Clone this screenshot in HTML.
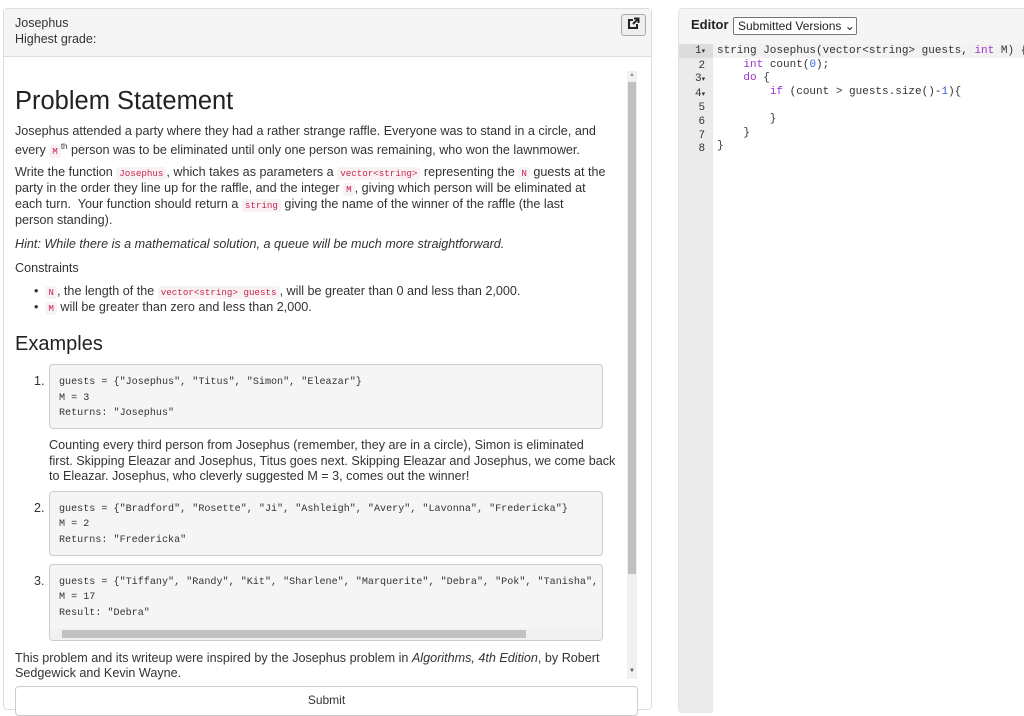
<!DOCTYPE html>
<html><head><meta charset="utf-8"><style>
*{box-sizing:border-box;margin:0;padding:0}
body{width:1024px;height:713px;overflow:hidden;background:#fff;font-family:"Liberation Sans",sans-serif;color:#333;position:relative}
.a{position:absolute;white-space:nowrap}
.t{font-size:12.6px;line-height:16px}
code{font-family:"Liberation Mono",monospace;font-size:9.2px;color:#c7254e;background:#f9f2f4;padding:1px 3px;border-radius:3px}
.pre{position:absolute;left:49px;width:554px;background:#f5f5f5;border:1px solid #ccc;border-radius:4px;font-family:"Liberation Mono",monospace;font-size:10.1px;color:#333;overflow:hidden}
.pre div{position:absolute;left:9px;white-space:nowrap}
.num{position:absolute;font-size:12.5px;color:#333}
.cm{font-family:"Liberation Mono",monospace;font-size:11px;position:absolute;white-space:nowrap;color:#333}
.k{color:#93c}
</style></head><body>
<div class="a" style="left:3px;top:8px;width:649px;height:702px;border:1px solid #ddd;border-radius:4px;background:#fff"></div>
<div class="a" style="left:4px;top:9px;width:647px;height:48px;background:#f5f5f5;border-bottom:1px solid #ddd"></div>
<div class="a" style="left:15px;top:15px;font-size:12.5px;line-height:16px;color:#333">Josephus<br>Highest grade:</div>
<div class="a" style="left:621px;top:14px;width:25px;height:22px;border:1px solid #aaa;border-radius:3px;background:#eee"></div>
<svg class="a" style="left:626px;top:17px" width="14" height="14" viewBox="0 0 14 14"><path d="M7 3H3v8h8V7" fill="none" stroke="#222" stroke-width="2"/><path d="M7 7l5-5M8 1.5h4.5V6" fill="none" stroke="#222" stroke-width="2"/></svg>
<div class="a" style="left:627px;top:71px;width:10px;height:608px;background:#f1f1f1"></div>
<div class="a" style="left:628px;top:82px;width:8px;height:492px;background:#c1c1c1"></div>
<div class="a" style="left:629px;top:72px;font-size:6px;color:#999">▲</div>
<div class="a" style="left:629px;top:668px;font-size:6px;color:#555">▼</div>

<div class="a" style="left:15px;top:87px;font-size:25.5px;color:#222">Problem Statement</div>
<div class="a t" style="left:15px;top:123px">Josephus attended a party where they had a rather strange raffle. Everyone was to stand in a circle, and</div>
<div class="a t" style="left:15px;top:139px">every <code>M</code><sup style="font-size:8px">th</sup> person was to be eliminated until only one person was remaining, who won the lawnmower.</div>
<div class="a t" style="left:15px;top:164px">Write the function <code>Josephus</code>, which takes as parameters a <code>vector&lt;string&gt;</code> representing the <code>N</code> guests at the</div>
<div class="a t" style="left:15px;top:180px">party in the order they line up for the raffle, and the integer <code>M</code>, giving which person will be eliminated at</div>
<div class="a t" style="left:15px;top:196px">each turn.&nbsp; Your function should return a <code>string</code> giving the name of the winner of the raffle (the last</div>
<div class="a t" style="left:15px;top:212px">person standing).</div>
<div class="a t" style="left:15px;top:236px;font-style:italic">Hint: While there is a mathematical solution, a queue will be much more straightforward.</div>
<div class="a t" style="left:15px;top:260px">Constraints</div>
<div class="a t" style="left:34px;top:283px">•&nbsp;&nbsp;<code>N</code>, the length of the <code>vector&lt;string&gt; guests</code>, will be greater than 0 and less than 2,000.</div>
<div class="a t" style="left:34px;top:299px">•&nbsp;&nbsp;<code>M</code> will be greater than zero and less than 2,000.</div>
<div class="a" style="left:15px;top:333px;font-size:20px;color:#222">Examples</div>

<div class="num" style="left:34px;top:374px">1.</div>
<div class="pre" style="top:364px;height:65px"><div style="top:12px">guests = {"Josephus", "Titus", "Simon", "Eleazar"}</div><div style="top:28px">M = 3</div><div style="top:43px">Returns: "Josephus"</div></div>
<div class="a t" style="left:49px;top:437px">Counting every third person from Josephus (remember, they are in a circle), Simon is eliminated</div>
<div class="a t" style="left:49px;top:453px">first. Skipping Eleazar and Josephus, Titus goes next. Skipping Eleazar and Josephus, we come back</div>
<div class="a t" style="left:49px;top:468px">to Eleazar. Josephus, who cleverly suggested M = 3, comes out the winner!</div>

<div class="num" style="left:34px;top:501px">2.</div>
<div class="pre" style="top:491px;height:65px"><div style="top:12px">guests = {"Bradford", "Rosette", "Ji", "Ashleigh", "Avery", "Lavonna", "Fredericka"}</div><div style="top:27px">M = 2</div><div style="top:43px">Returns: "Fredericka"</div></div>

<div class="num" style="left:34px;top:574px">3.</div>
<div class="pre" style="top:564px;height:77px"><div style="top:12px">guests = {"Tiffany", "Randy", "Kit", "Sharlene", "Marquerite", "Debra", "Pok", "Tanisha",</div><div style="top:27px">M = 17</div><div style="top:43px">Result: "Debra"</div>
<div style="left:0;top:63px;width:552px;height:12px;background:#f1f1f1"></div><div style="left:12px;top:65px;width:464px;height:8px;background:#c1c1c1"></div></div>

<div class="a t" style="left:15px;top:650px">This problem and its writeup were inspired by the Josephus problem in <i>Algorithms, 4th Edition</i>, by Robert</div>
<div class="a t" style="left:15px;top:665px">Sedgewick and Kevin Wayne.</div>
<div class="a" style="left:15px;top:686px;width:623px;height:30px;border:1px solid #ccc;border-radius:4px;background:#fff;text-align:center;font-size:12px;line-height:26px;color:#333">Submit</div>

<div class="a" style="left:678px;top:8px;width:350px;height:705px;background:#f5f5f5;border:1px solid #e3e3e3;border-radius:4px"></div>
<div class="a" style="left:691px;top:17px;font-size:13px;font-weight:bold;color:#222">Editor</div>
<div class="a" style="left:733px;top:17px;width:124px;height:18px;border:1px solid #767676;border-radius:2px;background:#fff;font-size:12px;line-height:16px;padding-left:4px;color:#222">Submitted Versions ⌄</div>
<div class="a" style="left:713px;top:44px;width:311px;height:669px;background:#fff"></div>
<div class="a" style="left:679px;top:44px;width:34px;height:669px;background:#ebebeb"></div>
<div class="a" style="left:679px;top:44px;width:34px;height:14px;background:#dcdcdc"></div>
<div class="a" style="left:713px;top:44px;width:311px;height:14px;background:#f2f2f2"></div>
<div class="cm" style="left:695px;top:45px;line-height:13.6px;font-size:11px;text-align:right">1<span style="font-size:7px">▾</span><br>2<br>3<span style="font-size:7px">▾</span><br>4<span style="font-size:7px">▾</span><br>5<br>6<br>7<br>8</div>
<div class="cm" style="left:717px;top:45px;line-height:13.6px">string Josephus(vector&lt;string&gt; guests, <span class="k">int</span> M) {<br>&nbsp;&nbsp;&nbsp;&nbsp;<span class="k">int</span> count(<span style="color:#36c">0</span>);<br>&nbsp;&nbsp;&nbsp;&nbsp;<span class="k">do</span> {<br>&nbsp;&nbsp;&nbsp;&nbsp;&nbsp;&nbsp;&nbsp;&nbsp;<span class="k">if</span> (count &gt; guests.size()-<span style="color:#36c">1</span>){<br><br>&nbsp;&nbsp;&nbsp;&nbsp;&nbsp;&nbsp;&nbsp;&nbsp;}<br>&nbsp;&nbsp;&nbsp;&nbsp;}<br>}</div>
</body></html>
